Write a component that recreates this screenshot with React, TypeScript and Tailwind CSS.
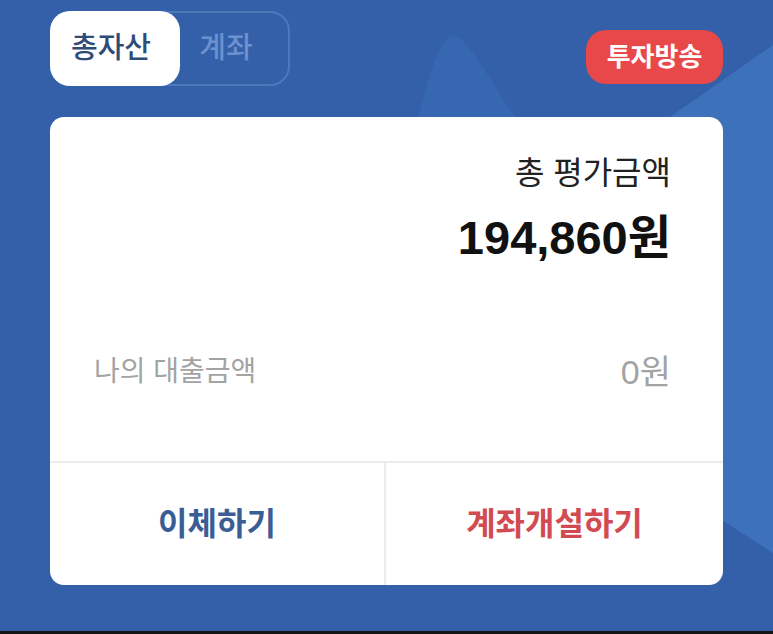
import React from "react";

const font = { fontFamily: '"Liberation Sans", "Noto Sans CJK KR", sans-serif' };

export default function App() {
  return (
    <div className="relative w-[773px] h-[634px] overflow-hidden bg-[#3360a8]" style={font}>
      <svg className="absolute inset-0" width="773" height="634" viewBox="0 0 773 634">
        <path d="M405 170 C 425 90, 438 36, 453 36 C 468 36, 485 75, 550 170 Z" fill="#3867b2" />
        <polygon points="773,45 600,166 600,441 773,553" fill="#3d72bb" />
      </svg>
      <div className="relative flex flex-col h-[631px] px-[50px] pt-[11px]">
        <div className="flex items-start justify-between">
          <div className="flex h-[75px] w-[240px] rounded-[20px] border-2 border-[#4f78bb]">
            <div className="-m-[2px] flex h-[75px] w-[130px] items-center justify-center rounded-[20px] bg-white pr-[8px] text-[29px] font-medium text-[#2f4b78]">
              총자산
            </div>
            <div className="flex flex-1 items-center justify-center pr-[14px] text-[29px] font-medium text-[#6d90cf]">
              계좌
            </div>
          </div>
          <div className="mt-[19px] flex h-[54px] w-[137px] items-center justify-center rounded-[20px] bg-[#e8484a] text-[26px] font-bold text-white">
            투자방송
          </div>
        </div>
        <div className="mt-[31px] flex h-[468px] flex-col overflow-hidden rounded-[14px] bg-white">
          <div className="flex h-[344px] flex-col pl-[44px] pr-[52px] pt-[37px]">
            <div className="text-right text-[32px] leading-[38px] text-[#222]">총 평가금액</div>
            <div className="mt-[18px] text-right text-[47px] font-bold leading-[56px] text-[#111]">194,860원</div>
            <div className="mt-[87px] flex items-center justify-between">
              <div className="text-[28px] leading-[38px] text-[#a3a3a3]">나의 대출금액</div>
              <div className="text-[34px] leading-[38px] text-[#a3a3a3]">0원</div>
            </div>
          </div>
          <div className="flex flex-1 border-t-2 border-[#ececec]">
            <div className="flex w-[336px] items-center justify-center border-r-2 border-[#ececec] text-[32px] font-semibold text-[#3a5d96]">
              이체하기
            </div>
            <div className="flex flex-1 items-center justify-center text-[32px] font-semibold text-[#d24a52]">
              계좌개설하기
            </div>
          </div>
        </div>
      </div>
      <div className="relative h-[3px] bg-[#141414]" />
    </div>
  );
}
